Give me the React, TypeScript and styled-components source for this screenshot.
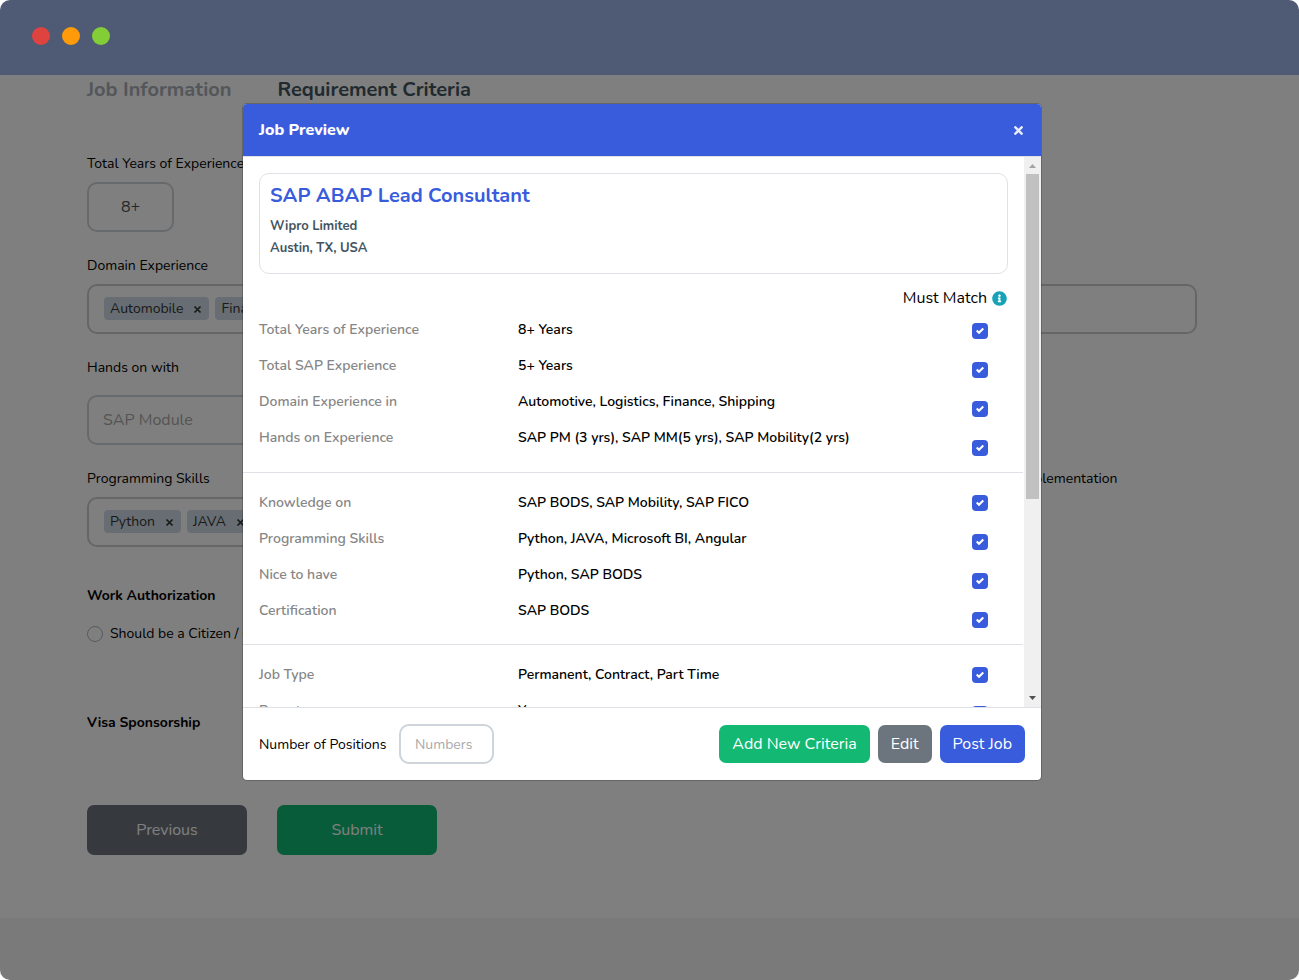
import React from "react";
import styled, { createGlobalStyle } from "styled-components";
import { FaInfoCircle, FaTimes } from "react-icons/fa";

const GlobalStyle = createGlobalStyle`
  *, *::before, *::after { box-sizing: border-box; }
  body {
    margin: 0;
    background: #fff;
    color: #000;
    font-family: Nunito, "Open Sans", "Noto Sans", sans-serif;
    font-size: 14px;
    line-height: 24px;
  }
  button, input { font-family: inherit; }
  h1, h2, h3, p { margin: 0; }
`;

const Window = styled.div`
  display: flex;
  flex-direction: column;
  min-height: 100vh;
  overflow: hidden;
  border-radius: 10px;
`;

const TitleBar = styled.header`
  display: flex;
  flex: none;
  gap: 12px;
  height: 75px;
  padding: 27px 32px;
  background: #4f5b75;
`;

const Dot = styled.span<{ $color: string }>`
  width: 18px;
  height: 18px;
  border-radius: 50%;
  background: ${(p) => p.$color};
`;

const Viewport = styled.div`
  position: relative;
  display: flex;
  flex: 1;
  flex-direction: column;
`;

const Page = styled.main`
  flex: 1;
  width: 100%;
  padding-right: 15px;
  background: #fff;
`;

const Container = styled.div`
  max-width: 1110px;
  margin: 0 auto;
`;

const PageFooter = styled.footer`
  height: 62px;
  background: #f5f5f5;
`;

const Steps = styled.nav`
  display: flex;
  gap: 46px;
  margin-bottom: 46px;
`;

const Step = styled.a<{ $active?: boolean }>`
  color: ${(p) => (p.$active ? "#43545f" : "#a6adb4")};
  font-size: 20px;
  font-weight: 700;
  line-height: 30px;
  text-decoration: none;
`;

const FieldRow = styled.div`
  display: grid;
  grid-template-columns: 3fr 1fr;
  column-gap: 30px;
`;

const Field = styled.div<{ $gap?: number }>`
  display: flex;
  flex-direction: column;
  align-items: stretch;
  gap: ${(p) => p.$gap ?? 5}px;
  margin-bottom: 21px;
  line-height: 26px;
`;

const YearsInput = styled.input`
  width: 87px;
  height: 50px;
  border: 2px solid #ced4da;
  border-radius: 10px;
  background: #fff;
  color: #495057;
  font-size: 16px;
  text-align: center;
`;

const ModuleInput = styled.input`
  width: 100%;
  height: 50px;
  padding: 0 14px;
  border: 2px solid #ced4da;
  border-radius: 10px;
  background: #fff;
  font-size: 16px;
  &::placeholder { color: #a9a9a9; opacity: 1; }
`;

const TagBox = styled.div`
  display: flex;
  align-items: flex-start;
  gap: 6px;
  height: 50px;
  padding: 11px 15px;
  border: 2px solid #ccc;
  border-radius: 10px;
`;

const Tag = styled.span`
  display: flex;
  align-items: center;
  gap: 10px;
  height: 23px;
  padding: 0 7px 0 6px;
  border-radius: 4px;
  background: #cedbe4;
  color: #333;
`;

const TagRemove = styled.button`
  display: flex;
  padding: 2px 0 0;
  border: 0;
  background: none;
  color: #333;
`;

const GroupTitle = styled.h2`
  font-size: 14px;
  font-weight: 700;
  line-height: 26px;
`;

const RadioLabel = styled.label`
  display: flex;
  align-items: center;
  gap: 7px;
  margin: 13px 0 64px;
`;

const Radio = styled.input`
  width: 16px;
  height: 16px;
  margin: 0;
  border: 1px solid #adb5bd;
  border-radius: 50%;
  appearance: none;
`;

const Authorization = styled.section`
  padding-top: 15px;
`;

const FormActions = styled.div`
  display: flex;
  gap: 30px;
  padding: 69px 0 63px;
`;

const PageButton = styled.button<{ $color: string }>`
  width: 160px;
  height: 50px;
  border: 0;
  border-radius: 7px;
  background: ${(p) => p.$color};
  color: #fff;
  font-size: 16px;
`;

const Backdrop = styled.div`
  position: absolute;
  inset: 0;
  display: flex;
  justify-content: center;
  align-items: flex-start;
  padding: 28px 15px 28px 0;
  background: rgba(0, 0, 0, 0.5);
`;

const Dialog = styled.section`
  display: flex;
  flex-direction: column;
  width: 100%;
  max-width: 800px;
  overflow: hidden;
  border: 1px solid rgba(0, 0, 0, 0.2);
  border-radius: 5px;
  background: #fff;
  background-clip: padding-box;
`;

const DialogHeader = styled.header`
  display: flex;
  align-items: center;
  justify-content: space-between;
  height: 53px;
  padding: 0 16px;
  border-bottom: 1px solid #dee2e6;
  background: #395cdd;
  background-clip: padding-box;
  color: #fff;
`;

const DialogTitle = styled.h1`
  font-size: 16px;
  font-weight: 800;
`;

const CloseButton = styled.button`
  display: flex;
  padding: 0;
  border: 0;
  background: none;
  color: #e8ecfb;
`;

const DialogBody = styled.div`
  display: flex;
  height: 550px;
`;

const ScrollArea = styled.div`
  flex: 1;
  min-width: 0;
  overflow: hidden;
  padding-top: 16px;
`;

const Scrollbar = styled.div`
  display: flex;
  flex: none;
  flex-direction: column;
  align-items: center;
  width: 17px;
  background: #f0f0f0;
`;

const ScrollArrow = styled.svg`
  display: block;
  flex: none;
  width: 17px;
  height: 17px;
`;

const ScrollTrack = styled.div`
  flex: 1;
  width: 13px;
`;

const ScrollThumb = styled.div`
  height: 63%;
  background: #c1c1c1;
`;

const JobCard = styled.article`
  min-height: 101px;
  margin: 0 16px 12px;
  padding: 8px 10px;
  border: 1px solid #dee2e6;
  border-radius: 10px;
`;

const JobTitle = styled.h2`
  margin-bottom: 5px;
  color: #395cdd;
  font-size: 20px;
  font-weight: 700;
  line-height: 28px;
`;

const JobMeta = styled.p`
  color: #43545f;
  font-size: 13px;
  font-weight: 700;
  line-height: 22px;
`;

const MustMatch = styled.div`
  display: flex;
  align-items: center;
  justify-content: flex-end;
  gap: 5px;
  padding-right: 17px;
  font-size: 16px;
`;

const Section = styled.section<{ $first?: boolean }>`
  display: grid;
  grid-template-columns: minmax(0, 4fr) minmax(0, 6fr) minmax(0, 2fr);
  padding: ${(p) => (p.$first ? 1 : 10)}px 0 5px;
  margin-right: 1px;
  border-bottom: 1px solid #dee2e6;
`;

const Column = styled.div<{ $first?: boolean }>`
  display: flex;
  flex-direction: column;
  min-width: 0;
  padding-top: ${(p) => (p.$first ? 1 : 2)}px;
`;

const LabelColumn = styled(Column)`
  padding-left: 16px;
`;

const ValueColumn = styled(Column)`
  padding-left: 15px;
`;

const CheckColumn = styled.div`
  display: flex;
  flex-direction: column;
  align-items: flex-end;
  padding-right: 35px;
`;

const CriterionLabel = styled.label`
  color: #868686;
  font-weight: 600;
  line-height: 36px;
`;

const CriterionValue = styled.span`
  line-height: 36px;
  font-weight: 600;
  white-space: nowrap;
`;

const CheckSlot = styled.span`
  display: grid;
  height: 39px;
  padding-top: 12px;
  align-content: start;
  justify-items: center;
  align-items: center;
  > * { grid-area: 1 / 1; }
`;

const CheckInput = styled.input`
  width: 16px;
  height: 16px;
  margin: 0;
  border-radius: 4px;
  background: #395cdd;
  appearance: none;
`;

const CheckMark = styled.svg`
  width: 8px;
  height: 8px;
  pointer-events: none;
`;

const DialogFooter = styled.footer`
  display: flex;
  align-items: center;
  gap: 8px;
  height: 73px;
  padding: 0 16px;
  border-top: 1px solid #dee2e6;
`;

const PositionsLabel = styled.label`
  min-width: 132px;
  padding-top: 2px;
`;

const PositionsInput = styled.input`
  width: 95px;
  height: 40px;
  margin-right: auto;
  padding: 0 14px;
  border: 2px solid #ced4da;
  border-radius: 10px;
  font-size: 14px;
  &::placeholder { color: #a9a9a9; opacity: 1; }
`;

const DialogButton = styled.button<{ $color: string }>`
  height: 38px;
  padding: 0 13px;
  border: 0;
  border-radius: 7px;
  background: ${(p) => p.$color};
  color: #fff;
  font-size: 16px;
`;

const sections = [
  [
    ["Total Years of Experience", "8+ Years"],
    ["Total SAP Experience", "5+ Years"],
    ["Domain Experience in", "Automotive, Logistics, Finance, Shipping"],
    ["Hands on Experience", "SAP PM (3 yrs), SAP MM(5 yrs), SAP Mobility(2 yrs)"],
  ],
  [
    ["Knowledge on", "SAP BODS, SAP Mobility, SAP FICO"],
    ["Programming Skills", "Python, JAVA, Microsoft BI, Angular"],
    ["Nice to have", "Python, SAP BODS"],
    ["Certification", "SAP BODS"],
  ],
  [
    ["Job Type", "Permanent, Contract, Part Time"],
    ["Remote", "Yes"],
  ],
];

function Tags({ names }: { names: string[] }) {
  return (
    <TagBox>
      {names.map((name) => (
        <Tag key={name}>
          {name}
          <TagRemove type="button" aria-label={`Remove ${name}`}>
            <svg width="9" height="9" viewBox="0 0 9 9" aria-hidden="true">
              <path d="M1.500 1.500l6 6M7.500 1.500l-6 6" stroke="currentColor" strokeWidth="1.700" />
            </svg>
          </TagRemove>
        </Tag>
      ))}
    </TagBox>
  );
}

function Criteria({ rows, index }: { rows: string[][]; index: number }) {
  const first = index === 0;
  return (
    <Section $first={first}>
      <LabelColumn $first={first}>
        {rows.map(([name], i) => (
          <CriterionLabel key={name} htmlFor={`match-${index}-${i}`}>{name}</CriterionLabel>
        ))}
      </LabelColumn>
      <ValueColumn $first={first}>
        {rows.map(([name, value]) => (
          <CriterionValue key={name}>{value}</CriterionValue>
        ))}
      </ValueColumn>
      <CheckColumn>
        {rows.map(([name], i) => (
          <CheckSlot key={name}>
            <CheckInput id={`match-${index}-${i}`} type="checkbox" defaultChecked />
            <CheckMark viewBox="0 0 8 8" aria-hidden="true">
              <path fill="#fff" d="M6.564.75l-3.59 3.612-1.538-1.55L0 4.26 2.974 7.25 8 2.193z" />
            </CheckMark>
          </CheckSlot>
        ))}
      </CheckColumn>
    </Section>
  );
}

export default function App() {
  return (
    <>
      <GlobalStyle />
      <Window>
        <TitleBar>
          <Dot $color="#df4340" />
          <Dot $color="#ff9a0a" />
          <Dot $color="#83cd36" />
        </TitleBar>
        <Viewport>
          <Page>
            <Container>
              <Steps>
                <Step href="#information">Job Information</Step>
                <Step href="#criteria" $active>Requirement Criteria</Step>
              </Steps>
              <Field>
                <label htmlFor="years">Total Years of Experience</label>
                <YearsInput id="years" defaultValue="8+" />
              </Field>
              <Field>
                <span>Domain Experience</span>
                <Tags names={["Automobile", "Finance"]} />
              </Field>
              <FieldRow>
                <Field $gap={14}>
                  <label htmlFor="module">Hands on with</label>
                  <ModuleInput id="module" placeholder="SAP Module" />
                </Field>
              </FieldRow>
              <FieldRow>
                <Field>
                  <span>Programming Skills</span>
                  <Tags names={["Python", "JAVA"]} />
                </Field>
                <Field>
                  <span>Full Life Cycle Implementation</span>
                </Field>
              </FieldRow>
              <Authorization>
                <GroupTitle>Work Authorization</GroupTitle>
                <RadioLabel>
                  <Radio type="radio" name="authorization" />
                  Should be a Citizen / GC
                </RadioLabel>
                <GroupTitle>Visa Sponsorship</GroupTitle>
              </Authorization>
              <FormActions>
                <PageButton type="button" $color="#6c757d">Previous</PageButton>
                <PageButton type="submit" $color="#13b873">Submit</PageButton>
              </FormActions>
            </Container>
          </Page>
          <PageFooter />
          <Backdrop>
            <Dialog role="dialog" aria-modal="true" aria-labelledby="preview-title">
              <DialogHeader>
                <DialogTitle id="preview-title">Job Preview</DialogTitle>
                <CloseButton type="button" aria-label="Close">
                  <FaTimes size={13} />
                </CloseButton>
              </DialogHeader>
              <DialogBody>
                <ScrollArea>
                  <JobCard>
                    <JobTitle>SAP ABAP Lead Consultant</JobTitle>
                    <JobMeta>Wipro Limited</JobMeta>
                    <JobMeta>Austin, TX, USA</JobMeta>
                  </JobCard>
                  <MustMatch>
                    Must Match
                    <FaInfoCircle size={15} color="#17a2b8" />
                  </MustMatch>
                  {sections.map((rows, i) => (
                    <Criteria key={i} rows={rows} index={i} />
                  ))}
                </ScrollArea>
                <Scrollbar aria-hidden="true">
                  <ScrollArrow viewBox="0 0 17 17">
                    <path fill="#a3a3a3" d="M5 11h7L8.500 7z" />
                  </ScrollArrow>
                  <ScrollTrack>
                    <ScrollThumb />
                  </ScrollTrack>
                  <ScrollArrow viewBox="0 0 17 17">
                    <path fill="#505050" d="M5 6h7L8.500 10z" />
                  </ScrollArrow>
                </Scrollbar>
              </DialogBody>
              <DialogFooter>
                <PositionsLabel htmlFor="positions">Number of Positions</PositionsLabel>
                <PositionsInput id="positions" placeholder="Numbers" />
                <DialogButton type="button" $color="#13b873">Add New Criteria</DialogButton>
                <DialogButton type="button" $color="#6c757d">Edit</DialogButton>
                <DialogButton type="button" $color="#395cdd">Post Job</DialogButton>
              </DialogFooter>
            </Dialog>
          </Backdrop>
        </Viewport>
      </Window>
    </>
  );
}
